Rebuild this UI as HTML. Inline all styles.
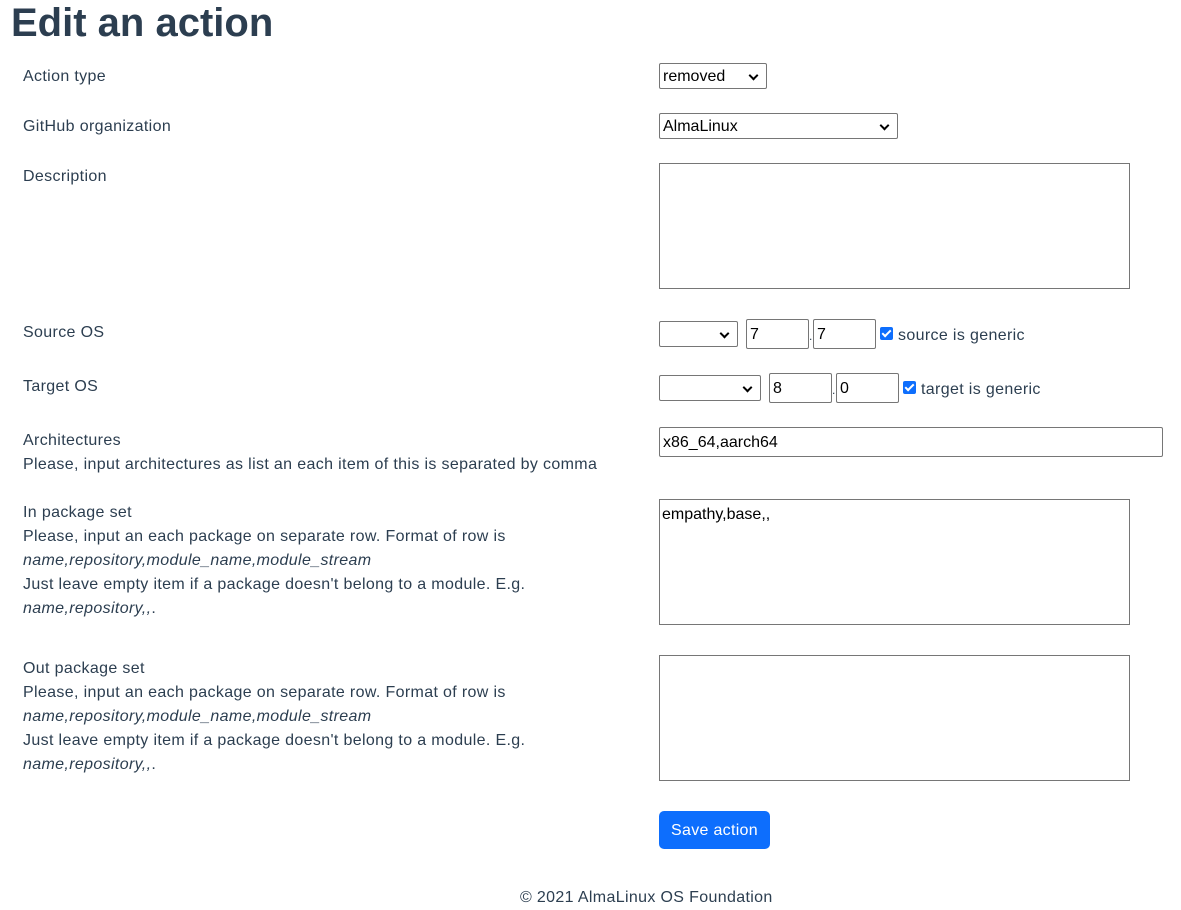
<!DOCTYPE html>
<html><head><meta charset="utf-8"><style>
body{margin:0;width:1181px;height:906px;background:#fff;font-family:"Liberation Sans",sans-serif;font-size:16px;color:#2c3e50;position:relative;overflow:hidden}
.a{position:absolute;line-height:24px;white-space:nowrap;letter-spacing:0.35px;margin-top:2px}
h1{position:absolute;left:11px;top:-3px;margin:0;font-size:40px;font-weight:bold;line-height:52px;color:#2c3e50}
.box{position:absolute;border:1px solid #767676;background:#fff;box-sizing:border-box;font-size:16px;color:#000;padding:1px 3px 0;line-height:24px;border-radius:2px}
.sel::after{content:"";position:absolute;right:9px;top:8px;width:5px;height:5px;border-right:2px solid #000;border-bottom:2px solid #000;transform:rotate(45deg)}
.ta{border-radius:0}
.cb{position:absolute;width:13px;height:13px;background:#0d6efd;border-radius:2px}
.cb::after{content:"";position:absolute;left:4px;top:1px;width:3px;height:7px;border-right:2px solid #fff;border-bottom:2px solid #fff;transform:rotate(45deg)}
i{font-style:italic}
</style></head><body>
<h1>Edit an action</h1>
<div class="a" style="left:23px;top:63px">Action type</div>
<div class="a" style="left:23px;top:113px">GitHub organization</div>
<div class="a" style="left:23px;top:163px">Description</div>
<div class="a" style="left:23px;top:319px">Source OS</div>
<div class="a" style="left:23px;top:373px">Target OS</div>
<div class="a" style="left:23px;top:427px">Architectures<br>Please, input architectures as list an each item of this is separated by comma</div>
<div class="a" style="left:23px;top:499px">In package set<br>Please, input an each package on separate row. Format of row is<br><i>name,repository,module_name,module_stream</i><br>Just leave empty item if a package doesn't belong to a module. E.g.<br><i>name,repository,,</i>.</div>
<div class="a" style="left:23px;top:655px">Out package set<br>Please, input an each package on separate row. Format of row is<br><i>name,repository,module_name,module_stream</i><br>Just leave empty item if a package doesn't belong to a module. E.g.<br><i>name,repository,,</i>.</div>

<div class="box sel" style="left:659px;top:63px;width:108px;height:26px">removed</div>
<div class="box sel" style="left:659px;top:113px;width:239px;height:26px">AlmaLinux</div>
<div class="box ta" style="left:659px;top:163px;width:471px;height:126px"></div>

<div class="box sel" style="left:659px;top:321px;width:79px;height:26px"></div>
<div class="box" style="left:746px;top:319px;width:63px;height:30px;line-height:28px">7</div>
<div class="a" style="left:809px;top:322px;font-size:12px">.</div>
<div class="box" style="left:813px;top:319px;width:63px;height:30px;line-height:28px">7</div>
<div class="cb" style="left:880px;top:327px"></div>
<div class="a" style="left:898px;top:322px">source is generic</div>

<div class="box sel" style="left:659px;top:375px;width:102px;height:26px"></div>
<div class="box" style="left:769px;top:373px;width:63px;height:30px;line-height:28px">8</div>
<div class="a" style="left:832px;top:376px;font-size:12px">.</div>
<div class="box" style="left:836px;top:373px;width:63px;height:30px;line-height:28px">0</div>
<div class="cb" style="left:903px;top:381px"></div>
<div class="a" style="left:921px;top:376px">target is generic</div>

<div class="box" style="left:659px;top:427px;width:504px;height:30px;line-height:28px">x86_64,aarch64</div>
<div class="box ta" style="left:659px;top:499px;width:471px;height:126px;padding:3px 2px">empathy,base,,</div>
<div class="box ta" style="left:659px;top:655px;width:471px;height:126px"></div>

<div style="position:absolute;left:659px;top:811px;width:111px;height:38px;background:#0d6efd;border-radius:5px;color:#fff;line-height:40px;text-align:center;letter-spacing:0.3px">Save action</div>
<div class="a" style="left:520px;top:884px">© 2021 AlmaLinux OS Foundation</div>
</body></html>
